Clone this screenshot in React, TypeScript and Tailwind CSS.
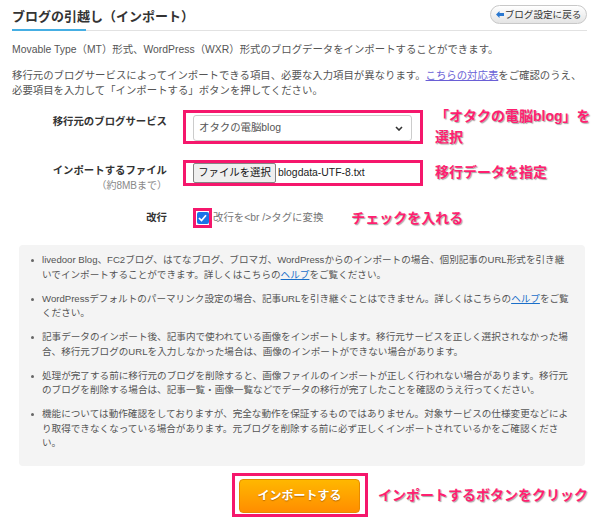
import React from "react";

function Anno({ children, className = "" }: { children: React.ReactNode; className?: string }) {
  return (
    <div
      className={
        "text-[14px] font-bold text-[#ff1f70] [text-shadow:1px_1px_1px_rgba(0,0,0,0.35)] whitespace-nowrap " +
        className
      }
    >
      {children}
    </div>
  );
}

function Li({ children }: { children: React.ReactNode }) {
  return (
    <li className="flex mb-[9.5px]">
      <span className="w-[23px] shrink-0 flex justify-end pr-[8px] pt-[6px]">
        <span className="block w-[3px] h-[3px] rounded-full bg-[#666]" />
      </span>
      <span className="flex-1">{children}</span>
    </li>
  );
}

function Help() {
  return <a className="text-[#1a6fc9] underline">ヘルプ</a>;
}

export default function App() {
  return (
    <div className="w-[600px] h-[521px] bg-white overflow-hidden font-['Liberation_Sans','Noto_Sans_CJK_JP',sans-serif] text-[#555]">
      {/* header */}
      <div className="pl-[12px] pr-[13px]">
        <div className="h-[29px] flex justify-between items-start">
          <h1 className="mt-[8px] text-[13px] leading-[18px] font-bold text-[#333]">
            ブログの引越し（インポート）
          </h1>
          <button className="mt-[5px] h-[19px] w-[97px] rounded-full border border-[#c8c8c8] bg-gradient-to-b from-white to-[#e4e4e4] flex items-center justify-center gap-[1px] text-[9.6px] leading-none text-[#333]">
            <svg width="8" height="7" viewBox="0 0 8 7">
              <path d="M0 3.5 L3.5 0 L3.5 2 L8 2 L8 5 L3.5 5 L3.5 7 Z" fill="#2b78d0" />
            </svg>
            ブログ設定に戻る
          </button>
        </div>
        <div className="flex items-end h-[2px]">
          <div className="w-[74px] h-[2px] bg-[#45aee3]" />
          <div className="flex-1 h-px bg-[#e2e2e2]" />
        </div>
      </div>

      {/* intro */}
      <div className="px-[12px] text-[10.4px] leading-[15px] text-[#555]">
        <p className="mt-[11px]">
          Movable Type（MT）形式、WordPress（WXR）形式のブログデータをインポートすることができます。
        </p>
        <p className="mt-[11px] whitespace-nowrap">
          移行元のブログサービスによってインポートできる項目、必要な入力項目が異なります。
          <a className="text-[#6a5fd6] underline">こちらの対応表</a>をご確認のうえ、
          <br />
          必要項目を入力して「インポートする」ボタンを押してください。
        </p>
      </div>

      {/* form */}
      <div className="mt-[12px]">
        {/* row 1 */}
        <div className="flex items-start">
          <div className="w-[183px] pr-[16px] pt-[4px] text-right text-[10.4px] leading-[16px] font-bold text-[#333]">
            移行元のブログサービス
          </div>
          <div className="w-[240px] h-[34px] border-[3px] border-[#f5176c] pl-[7px] pr-[8px] pt-[2px]">
            <div className="h-[26px] rounded-[3px] border border-[#ccc] bg-white flex items-center justify-between pl-[5px] pr-[8px] text-[10.4px] text-[#555]">
              <span>オタクの電脳blog</span>
              <svg width="8" height="5" viewBox="0 0 8 5">
                <path d="M1 1 L4 4 L7 1" fill="none" stroke="#333" strokeWidth="1.6" />
              </svg>
            </div>
          </div>
          <div className="ml-[12px] -mt-[4px] leading-[21px]">
            <Anno>「オタクの電脳blog」を</Anno>
            <Anno>選択</Anno>
          </div>
        </div>

        {/* row 2 */}
        <div className="flex items-start mt-[12px]">
          <div className="w-[183px] pr-[16px] pt-[3px] text-right">
            <div className="text-[10.4px] leading-[16px] font-bold text-[#333]">インポートするファイル</div>
            <div className="text-[10px] leading-[14px] text-[#888]">（約8MBまで）</div>
          </div>
          <div className="w-[240px] h-[26px] border-[3px] border-[#f5176c] pl-[7px] flex items-center">
            <span className="h-[20px] w-[83px] rounded-[2px] border border-[#858585] bg-[#efefef] flex items-center justify-center text-[10.4px] text-[#111]">
              ファイルを選択
            </span>
            <span className="ml-[2px] text-[10.4px] text-[#222]">blogdata-UTF-8.txt</span>
          </div>
          <div className="ml-[12px] mt-[2px] leading-[20px]">
            <Anno>移行データを指定</Anno>
          </div>
        </div>

        {/* row 3 */}
        <div className="flex items-center mt-[15px] h-[20px]">
          <div className="w-[183px] pr-[16px] text-right text-[10.4px] leading-[16px] font-bold text-[#333]">
            改行
          </div>
          <div className="ml-[10px] w-[19px] h-[20px] border-[3px] border-[#f5176c] flex items-center justify-center">
            <span className="w-[12px] h-[12px] rounded-[2px] bg-[#1a73e8] flex items-center justify-center">
              <svg width="9" height="8" viewBox="0 0 9 8">
                <path d="M1 4 L3.5 6.5 L8 1.2" fill="none" stroke="white" strokeWidth="1.7" />
              </svg>
            </span>
          </div>
          <span className="ml-[1px] text-[10.4px] text-[#777]">改行を&lt;br /&gt;タグに変換</span>
          <Anno className="ml-[28px]">チェックを入れる</Anno>
        </div>
      </div>

      {/* notes */}
      <ul className="ml-[19px] w-[566px] mt-[17px] rounded-[4px] bg-[#f4f4f4] pt-[8px] text-[9.6px] leading-[14.5px] text-[#555] whitespace-nowrap">
        <Li>
          livedoor Blog、FC2ブログ、はてなブログ、ブロマガ、WordPressからのインポートの場合、個別記事のURL形式を引き継
          <br />
          いでインポートすることができます。詳しくはこちらの<Help />をご覧ください。
        </Li>
        <Li>
          WordPressデフォルトのパーマリンク設定の場合、記事URLを引き継ぐことはできません。詳しくはこちらの<Help />をご覧
          <br />
          ください。
        </Li>
        <Li>
          記事データのインポート後、記事内で使われている画像をインポートします。移行元サービスを正しく選択されなかった場
          <br />
          合、移行元ブログのURLを入力しなかった場合は、画像のインポートができない場合があります。
        </Li>
        <Li>
          処理が完了する前に移行元のブログを削除すると、画像ファイルのインポートが正しく行われない場合があります。移行元
          <br />
          のブログを削除する場合は、記事一覧・画像一覧などでデータの移行が完了したことを確認のうえ行ってください。
        </Li>
        <Li>
          機能については動作確認をしておりますが、完全な動作を保証するものではありません。対象サービスの仕様変更などによ
          <br />
          り取得できなくなっている場合があります。元ブログを削除する前に必ず正しくインポートされているかをご確認くださ
          <br />
          い。
        </Li>
        <div className="h-[6px]" />
      </ul>

      {/* submit */}
      <div className="mt-[7px] grid grid-cols-[1fr_auto_1fr] items-center">
        <div />
        <div className="border-[3px] border-[#f5176c] pl-[4px] pr-[5px] pt-[3px] pb-[1px]">
          <button className="w-[121px] h-[34px] rounded-[4px] border border-[#e68a00] bg-gradient-to-b from-[#ffb700] to-[#ff8d00] text-white font-bold text-[12px] [text-shadow:0_1px_1px_rgba(120,60,0,0.5)]">
            インポートする
          </button>
        </div>
        <div className="pl-[10px]">
          <Anno>インポートするボタンをクリック</Anno>
        </div>
      </div>
    </div>
  );
}
